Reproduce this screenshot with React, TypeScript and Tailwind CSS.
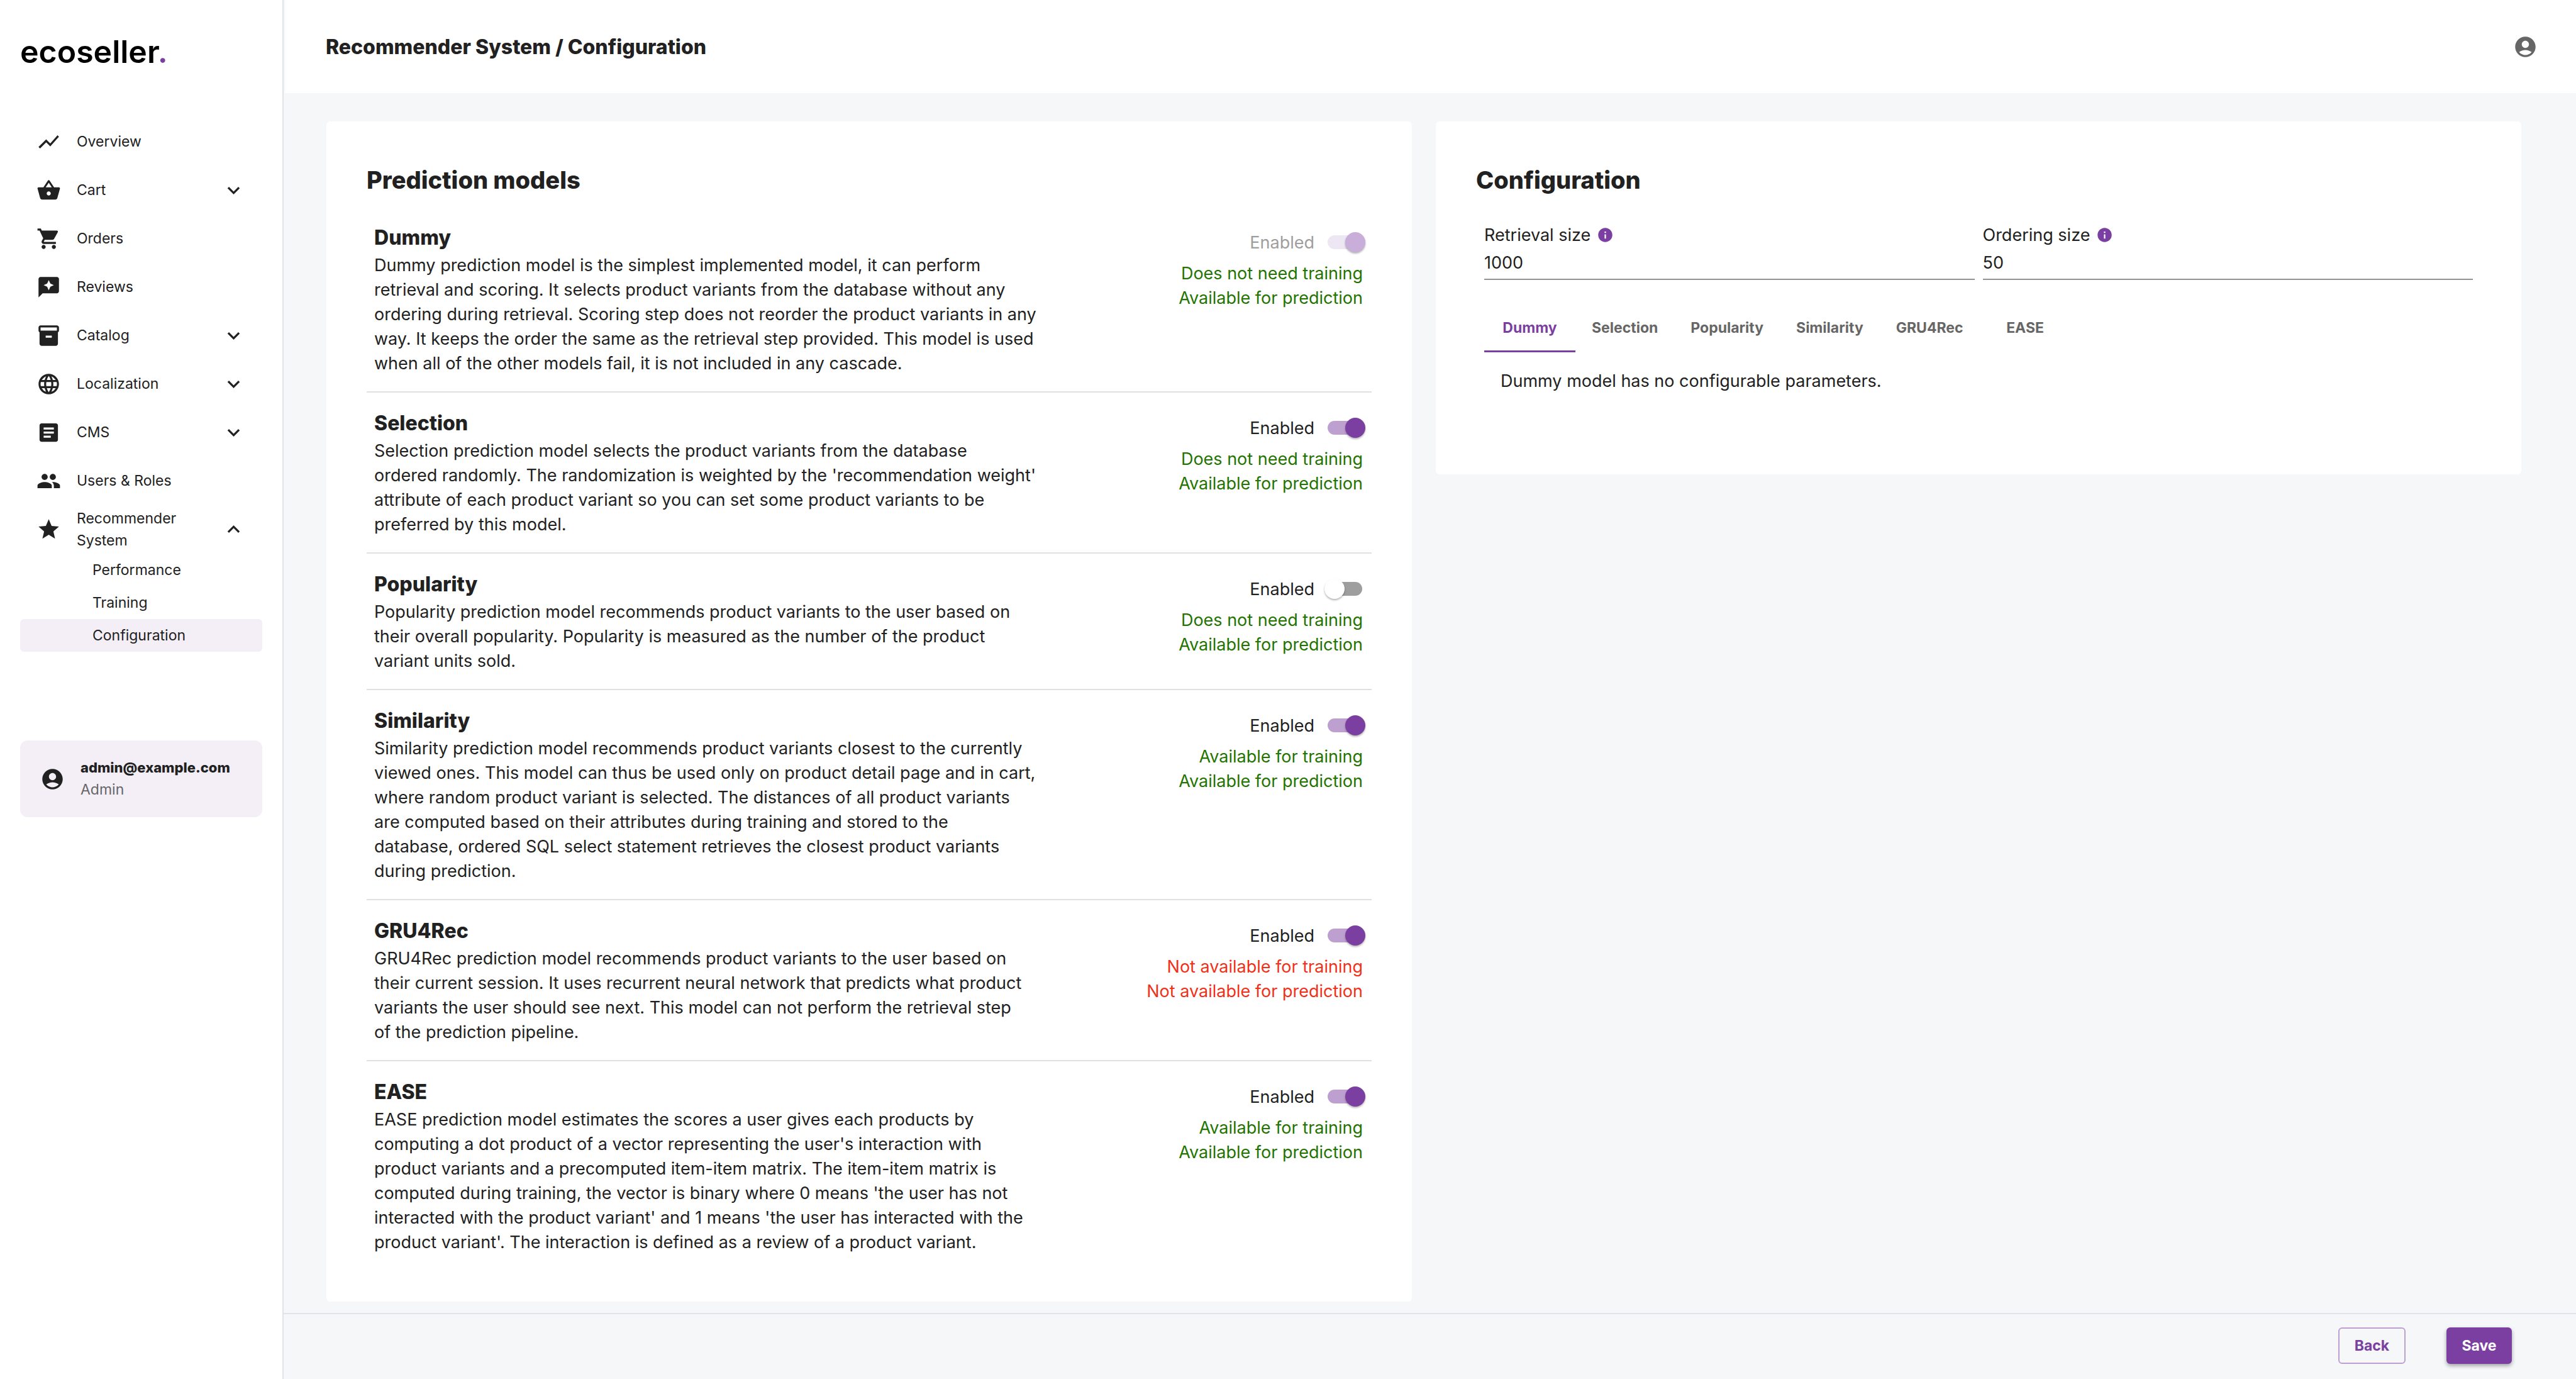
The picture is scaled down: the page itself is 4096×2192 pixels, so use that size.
import { useState } from 'react';
import type { ReactNode } from 'react';
import {
  MdArticle,
  MdExpandLess,
  MdExpandMore,
  MdGroup,
  MdInfo,
  MdInventory2,
  MdLanguage,
  MdReviews,
  MdShoppingBasket,
  MdShoppingCart,
  MdShowChart,
  MdStar,
} from 'react-icons/md';

type Status = { text: string; ok: boolean };
type Model = {
  name: string;
  description: string;
  enabled: boolean;
  locked?: boolean;
  statuses: Status[];
};

const NO_TRAINING: Status = { text: 'Does not need training', ok: true };
const TRAINING: Status = { text: 'Available for training', ok: true };
const PREDICTION: Status = { text: 'Available for prediction', ok: true };

const MODELS: Model[] = [
  {
    name: 'Dummy',
    description: `Dummy prediction model is the simplest implemented model, it can perform
retrieval and scoring. It selects product variants from the database without any
ordering during retrieval. Scoring step does not reorder the product variants in any
way. It keeps the order the same as the retrieval step provided. This model is used
when all of the other models fail, it is not included in any cascade.`,
    enabled: true,
    locked: true,
    statuses: [NO_TRAINING, PREDICTION],
  },
  {
    name: 'Selection',
    description: `Selection prediction model selects the product variants from the database
ordered randomly. The randomization is weighted by the 'recommendation weight'
attribute of each product variant so you can set some product variants to be
preferred by this model.`,
    enabled: true,
    statuses: [NO_TRAINING, PREDICTION],
  },
  {
    name: 'Popularity',
    description: `Popularity prediction model recommends product variants to the user based on
their overall popularity. Popularity is measured as the number of the product
variant units sold.`,
    enabled: false,
    statuses: [NO_TRAINING, PREDICTION],
  },
  {
    name: 'Similarity',
    description: `Similarity prediction model recommends product variants closest to the currently
viewed ones. This model can thus be used only on product detail page and in cart,
where random product variant is selected. The distances of all product variants
are computed based on their attributes during training and stored to the
database, ordered SQL select statement retrieves the closest product variants
during prediction.`,
    enabled: true,
    statuses: [TRAINING, PREDICTION],
  },
  {
    name: 'GRU4Rec',
    description: `GRU4Rec prediction model recommends product variants to the user based on
their current session. It uses recurrent neural network that predicts what product
variants the user should see next. This model can not perform the retrieval step
of the prediction pipeline.`,
    enabled: true,
    statuses: [
      { text: 'Not available for training', ok: false },
      { text: 'Not available for prediction', ok: false },
    ],
  },
  {
    name: 'EASE',
    description: `EASE prediction model estimates the scores a user gives each products by
computing a dot product of a vector representing the user's interaction with
product variants and a precomputed item-item matrix. The item-item matrix is
computed during training, the vector is binary where 0 means 'the user has not
interacted with the product variant' and 1 means 'the user has interacted with the
product variant'. The interaction is defined as a review of a product variant.`,
    enabled: true,
    statuses: [TRAINING, PREDICTION],
  },
];

const NAV: { label: string; icon: ReactNode; arrow?: 'down' | 'up' }[] = [
  { label: 'Overview', icon: <MdShowChart /> },
  { label: 'Cart', icon: <MdShoppingBasket />, arrow: 'down' },
  { label: 'Orders', icon: <MdShoppingCart /> },
  { label: 'Reviews', icon: <MdReviews /> },
  { label: 'Catalog', icon: <MdInventory2 />, arrow: 'down' },
  { label: 'Localization', icon: <MdLanguage />, arrow: 'down' },
  { label: 'CMS', icon: <MdArticle />, arrow: 'down' },
  { label: 'Users & Roles', icon: <MdGroup /> },
  { label: 'Recommender System', icon: <MdStar />, arrow: 'up' },
];

function AccountIcon() {
  return (
    <svg viewBox="0 0 24 24" className="size-[39px] shrink-0" fill="currentColor" aria-hidden="true">
      <path d="M12 2C6.48 2 2 6.48 2 12s4.48 10 10 10 10-4.48 10-10S17.52 2 12 2zm0 4c1.93 0 3.5 1.57 3.5 3.5S13.93 13 12 13s-3.5-1.57-3.5-3.5S10.07 6 12 6zm0 14c-2.03 0-4.43-.82-6.14-2.88C7.55 15.8 9.68 15 12 15s4.45.8 6.14 2.12C16.43 19.18 14.03 20 12 20z" />
    </svg>
  );
}

function Sidebar() {
  return (
    <aside className="flex w-[451px] shrink-0 flex-col border-r-2 border-[#e0e3e7] bg-white px-8 text-[23px] leading-[35px]">
      <a href="#home" className="mt-[50px] h-[64px] text-[50px] leading-[64px] font-semibold text-black">
        ecoseller<span className="text-[#7b3fa2]">.</span>
      </a>
      <nav className="mt-[73px]">
        <ul>
          {NAV.map((item) => (
            <li key={item.label}>
              <a href="#nav" className="flex h-[77px] items-center pr-[26px] pl-[26px]">
                <span className="text-[39px]">{item.icon}</span>
                <span className="ml-[25px] w-[200px]">{item.label}</span>
                <span className="ml-auto text-[39px]">
                  {item.arrow === 'down' && <MdExpandMore />}
                  {item.arrow === 'up' && <MdExpandLess />}
                </span>
              </a>
            </li>
          ))}
        </ul>
        <ul>
          {['Performance', 'Training', 'Configuration'].map((label) => (
            <li key={label}>
              <a
                href="#sub"
                className={
                  label === 'Configuration'
                    ? 'flex h-[52px] items-center rounded-md bg-[#f4eff7] pl-[115px]'
                    : 'flex h-[52px] items-center pl-[115px]'
                }
              >
                {label}
              </a>
            </li>
          ))}
        </ul>
      </nav>
      <div className="mt-[141px] flex h-[122px] items-center rounded-xl bg-[#f4eff7] pl-8">
        <AccountIcon />
        <div className="ml-[25px]">
          <p className="text-[22px] font-extrabold">admin@example.com</p>
          <p className="text-[#666]">Admin</p>
        </div>
      </div>
    </aside>
  );
}

function Switch({ id, on, locked, onChange }: { id: string; on: boolean; locked?: boolean; onChange: () => void }) {
  const track = locked ? 'bg-[#ede6f3]' : on ? 'bg-[#bd9fd0]' : 'bg-[#9e9e9e]';
  const thumb = locked ? 'bg-[#c9aed9]' : on ? 'bg-[#7b3fa2]' : 'bg-white';
  return (
    <span className="relative -mr-1 flex h-8 w-[65px] items-center justify-center">
      <input
        id={id}
        type="checkbox"
        role="switch"
        checked={on}
        disabled={locked}
        onChange={onChange}
        className="peer absolute inset-0 z-10 opacity-0"
      />
      <span className={`h-[22px] w-[55px] rounded-full ${track}`} />
      <span
        className={`absolute top-0 size-8 rounded-full shadow-[0_2px_3px_rgba(0,0,0,0.3)] ${thumb} ${on ? 'right-0' : 'left-0'}`}
      />
    </span>
  );
}

function ModelRow({ model }: { model: Model }) {
  const [on, setOn] = useState(model.enabled);
  const id = `enabled-${model.name}`;
  return (
    <li className="flex justify-between border-b-2 border-[#e0e0e0] pt-7 pr-[14px] pb-[25px] pl-3 last:border-b-0">
      <div>
        <h3 className="mb-[3px] text-[32px] leading-[42px] font-extrabold">{model.name}</h3>
        <p className="whitespace-pre-line">{model.description}</p>
      </div>
      <div className="flex flex-col items-end">
        <div className="mb-0.5 flex h-14 items-center gap-4">
          <label htmlFor={id} className={model.locked ? 'text-[#9e9e9e]' : ''}>
            Enabled
          </label>
          <Switch id={id} on={on} locked={model.locked} onChange={() => setOn(!on)} />
        </div>
        {model.statuses.map((s) => (
          <p key={s.text} className={s.ok ? 'text-[#237300]' : 'text-[#f03018]'}>
            {s.text}
          </p>
        ))}
      </div>
    </li>
  );
}

function SizeField({ id, label, initial }: { id: string; label: string; initial: string }) {
  const [value, setValue] = useState(initial);
  return (
    <div className="flex-1">
      <div className="flex items-center">
        <label htmlFor={id}>{label}</label>
        <MdInfo className="ml-2.5 size-[27px] text-[#7b3fa2]" />
      </div>
      <input
        id={id}
        value={value}
        onChange={(e) => setValue(e.target.value)}
        className="mt-[5px] block w-full border-b-2 border-[#949494] pb-1.5 outline-none"
      />
    </div>
  );
}

function ConfigurationCard() {
  const [tab, setTab] = useState('Dummy');
  return (
    <section className="flex-1 rounded-md bg-white px-16 pt-16 pb-[103px]">
      <h2 className="text-[38px] leading-[58px] font-extrabold">Configuration</h2>
      <div className="mt-[14px] px-[13px] pt-[25px]">
        <div className="flex gap-[13px]">
          <SizeField id="retrieval" label="Retrieval size" initial="1000" />
          <SizeField id="ordering" label="Ordering size" initial="50" />
        </div>
        <div role="tablist" className="mt-[38px] flex text-[23px] font-bold">
          {MODELS.map(({ name }) => (
            <button
              key={name}
              type="button"
              role="tab"
              aria-selected={name === tab}
              onClick={() => setTab(name)}
              className={
                name === tab
                  ? 'h-[77px] min-w-[145px] border-y-3 border-t-transparent border-b-[#7b3fa2] px-[26px] text-[#7b3fa2]'
                  : 'h-[77px] min-w-[145px] border-y-3 border-transparent px-[26px] text-[#666]'
              }
            >
              {name}
            </button>
          ))}
        </div>
        <p role="tabpanel" className="p-[26px]">
          {tab} model has no configurable parameters.
        </p>
      </div>
    </section>
  );
}

export default function App() {
  return (
    <div className="flex min-h-screen bg-[#f5f7f9] font-['Inter',sans-serif] text-[27px] leading-[39px] text-[#212121]">
      <Sidebar />
      <div className="flex min-w-0 flex-1 flex-col">
        <header className="ml-0.5 flex h-[148px] items-center justify-between bg-white pr-[61px] pl-[65px]">
          <h1 className="text-[32px] font-extrabold">Recommender System / Configuration</h1>
          <button type="button" aria-label="Account" className="text-[#666]">
            <AccountIcon />
          </button>
        </header>
        <main className="flex items-start gap-[38px] pt-[45px] pr-[87px] pb-[18px] pl-[68px]">
          <section className="flex-1 rounded-md bg-white px-16 pt-16 pb-[50px]">
            <h2 className="text-[38px] leading-[58px] font-extrabold">Prediction models</h2>
            <ul className="mt-[14px]">
              {MODELS.map((m) => (
                <ModelRow key={m.name} model={m} />
              ))}
            </ul>
          </section>
          <ConfigurationCard />
        </main>
        <footer className="mt-auto flex justify-end gap-[65px] border-t-2 border-[#e0e3e7] pt-[21px] pr-[102px] pb-6 text-[23px] font-bold">
          <button type="button" className="h-[58px] w-[107px] rounded-md border-2 border-[#bd9fd0] text-[#7b3fa2]">
            Back
          </button>
          <button
            type="button"
            className="h-[58px] w-[104px] rounded-md bg-[#7b3fa2] text-white shadow-[0_3px_6px_rgba(0,0,0,0.35)]"
          >
            Save
          </button>
        </footer>
      </div>
    </div>
  );
}
